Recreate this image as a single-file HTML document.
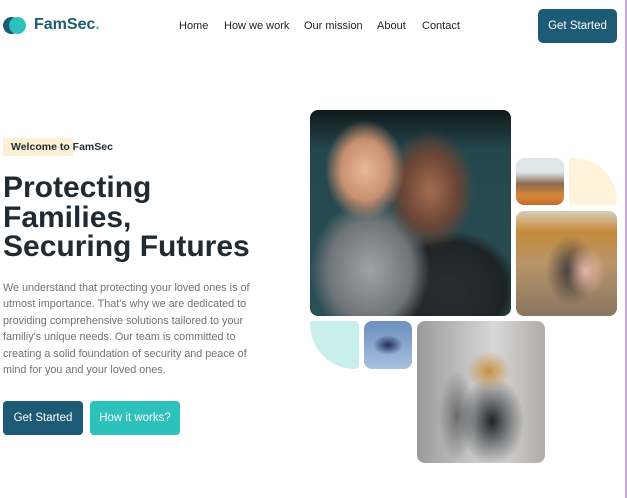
<!DOCTYPE html>
<html><head><style>
*{margin:0;padding:0;box-sizing:border-box}
body{width:627px;height:498px;background:#fff;font-family:"Liberation Sans",sans-serif;position:relative;overflow:hidden;color:#1f2a33}
.a{position:absolute}
.nav{font-size:11px;color:#222;top:20px}
.ph{position:absolute;border-radius:8px;overflow:hidden}
</style></head><body>
<div class="a" style="left:3px;top:17px;width:17px;height:17px;border-radius:50%;background:#1d5a75"></div>
<div class="a" style="left:9px;top:17px;width:17px;height:17px;border-radius:50%;background:#2cc2bb"></div>
<div class="a" style="left:34px;top:16px;font-size:16px;font-weight:bold;color:#1d5a75">FamSec<span style="color:#2cc2bb">.</span></div>
<div class="a nav" style="left:179px">Home</div>
<div class="a nav" style="left:224px">How we work</div>
<div class="a nav" style="left:304px">Our mission</div>
<div class="a nav" style="left:377px">About</div>
<div class="a nav" style="left:422px">Contact</div>
<div class="a" style="left:538px;top:9px;width:79px;height:34px;border-radius:5px;background:#1d5a75;color:#fff;font-size:11.5px;line-height:34px;text-align:center">Get Started</div>
<div class="a" style="right:0;top:0;width:2px;height:498px;background:#c9a8f0"></div>

<div class="a" style="left:3px;top:138px;width:70px;height:18px;background:#fdf0d6"></div>
<div class="a" style="left:11px;top:141px;font-size:10.5px;font-weight:bold;color:#1f2a33">Welcome to FamSec</div>
<div class="a" style="left:3px;top:173px;font-size:30px;font-weight:bold;line-height:29.5px;color:#1f2a33">Protecting<br>Families,<br>Securing Futures</div>
<div class="a" style="left:3px;top:280px;width:256px;font-size:10.8px;line-height:16.4px;color:#6b7378">We understand that protecting your loved ones is of utmost importance. That's why we are dedicated to providing comprehensive solutions tailored to your familiy's unique needs. Our team is committed to creating a solid foundation of security and peace of mind for you and your loved ones.</div>
<div class="a" style="left:3px;top:401px;width:80px;height:34px;border-radius:4px;background:#1d5a75;color:#fff;font-size:11.5px;line-height:34px;text-align:center">Get Started</div>
<div class="a" style="left:90px;top:401px;width:90px;height:34px;border-radius:4px;background:#2cc2bb;color:#fff;font-size:11.5px;line-height:34px;text-align:center">How it works?</div>

<div class="ph" style="left:310px;top:110px;width:201px;height:206px;background:radial-gradient(ellipse 40px 50px at 55px 60px,#e6b89a 0,#c99070 60%,transparent 100%),radial-gradient(ellipse 45px 60px at 120px 80px,#a36d50 0,#6b4535 60%,transparent 100%),radial-gradient(ellipse 60px 70px at 60px 160px,#9ea3a6 0,#6e7478 70%,transparent 100%),radial-gradient(ellipse 70px 60px at 140px 180px,#2a2e30 0,#1e2426 80%,transparent 100%),linear-gradient(#101a1c,#24474d 20%,#2a4f55)"></div>
<div class="ph" style="left:516px;top:158px;width:48px;height:47px;background:linear-gradient(#dfe6ea 30%,#8a6a50 55%,#d8883a 80%,#c46a2a)"></div>
<div class="a" style="left:569px;top:158px;width:48px;height:47px;background:#fff3dc;border-radius:2px 46px 4px 2px"></div>
<div class="ph" style="left:516px;top:211px;width:101px;height:105px;background:radial-gradient(ellipse 20px 25px at 70px 60px,#e8b8a8,transparent),radial-gradient(ellipse 25px 35px at 55px 60px,#3a3535,transparent),linear-gradient(#d8cdb8,#c48a3a 20%,#b8956a 50%,#8a7560)"></div>
<div class="a" style="left:310px;top:321px;width:49px;height:48px;background:#c9efec;border-radius:2px 4px 4px 46px"></div>
<div class="ph" style="left:364px;top:321px;width:48px;height:48px;background:radial-gradient(ellipse 15px 10px at 24px 24px,#1e2c5a,transparent),linear-gradient(#6c8fbf,#a8c0de)"></div>
<div class="ph" style="left:417px;top:321px;width:128px;height:142px;background:radial-gradient(ellipse 22px 20px at 72px 50px,#c89040,transparent),radial-gradient(ellipse 32px 45px at 75px 100px,#1e2328,transparent),radial-gradient(ellipse 18px 45px at 40px 95px,#6a6c6a,transparent),linear-gradient(90deg,#9a9a9a,#d8d8d8 60%,#b0aca8)"></div>
</body></html>
